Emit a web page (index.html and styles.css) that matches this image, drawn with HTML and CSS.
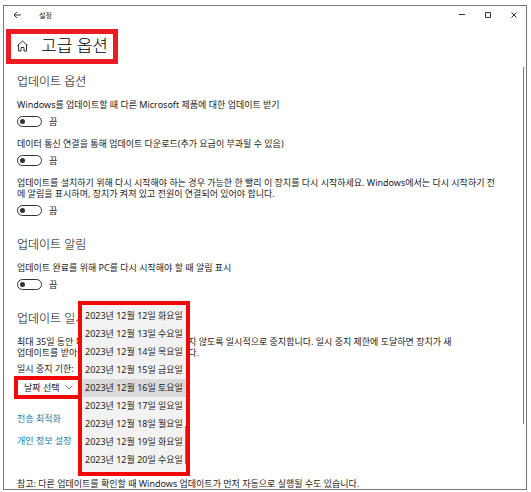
FILE: index.html
```html
<!DOCTYPE html>
<html lang="ko">
<head>
<meta charset="utf-8">
<meta name="viewport" content="width=device-width, initial-scale=1">
<title>설정</title>
<link rel="stylesheet" href="styles.css">
</head>
<body>
<div class="window">
  <header class="titlebar">
    <button class="icon-button" type="button" aria-label="뒤로">
      <svg width="8" height="8" viewBox="0 0 8 8"><path d="M8 4H1M4 1L1 4l3 3"/></svg>
    </button>
    <span class="app-name">설정</span>
    <div class="window-controls">
      <button class="icon-button" type="button" aria-label="최소화">
        <svg width="6" height="6" viewBox="0 0 6 6"><path d="M0 2.500h6"/></svg>
      </button>
      <button class="icon-button" type="button" aria-label="최대화">
        <svg width="6" height="6" viewBox="0 0 6 6"><path d="M.5.5h5v5h-5z"/></svg>
      </button>
      <button class="icon-button" type="button" aria-label="닫기">
        <svg width="6" height="6" viewBox="0 0 6 6"><path d="M.5.5l5 5M5.500.5l-5 5"/></svg>
      </button>
    </div>
  </header>

  <div class="page-title">
    <svg width="11" height="12" viewBox="0 0 11 12" aria-hidden="true"><path d="M.5 5.500L5.500 1l5 4.500M1.500 5v6h2.500V7.500h3V11h2.500V5"/></svg>
    <h1>고급 옵션</h1>
  </div>

  <main class="content">
    <section>
      <h2>업데이트 옵션</h2>
      <div class="setting">
        <label for="other-products">Windows를 업데이트할 때 다른 Microsoft 제품에 대한 업데이트 받기</label>
        <div class="switch-row"><input class="switch" type="checkbox" role="switch" id="other-products"><span>끔</span></div>
      </div>
      <div class="setting">
        <label for="metered">데이터 통신 연결을 통해 업데이트 다운로드(추가 요금이 부과될 수 있음)</label>
        <div class="switch-row"><input class="switch" type="checkbox" role="switch" id="metered"><span>끔</span></div>
      </div>
      <div class="setting">
        <label for="restart">업데이트를 설치하기 위해 다시 시작해야 하는 경우 가능한 한 빨리 이 장치를 다시 시작하세요. Windows에서는 다시 시작하기 전<br>에 알림을 표시하며, 장치가 켜져 있고 전원이 연결되어 있어야 합니다.</label>
        <div class="switch-row"><input class="switch" type="checkbox" role="switch" id="restart"><span>끔</span></div>
      </div>
    </section>

    <section>
      <h2>업데이트 알림</h2>
      <div class="setting">
        <label for="notify">업데이트 완료를 위해 PC를 다시 시작해야 할 때 알림 표시</label>
        <div class="switch-row"><input class="switch" type="checkbox" role="switch" id="notify"><span>끔</span></div>
      </div>
    </section>

    <section>
      <h2>업데이트 일시 중지</h2>
      <p>최대 35일 동안 디바이스에 업데이트가 설치되지 않도록 일시적으로 중지합니다. 일시 중지 제한에 도달하면 장치가 새<br>업데이트를 받아야 다시 일시 중지할 수 있습니다.</p>
      <label class="pause-label" for="pause">일시 중지 기한:</label>
      <div class="picker">
        <select id="pause"><option>날짜 선택</option></select>
        <svg class="chevron" width="8" height="5" viewBox="0 0 8 5" aria-hidden="true"><path d="M.5.5L4 4 7.500.5"/></svg>
        <ul class="date-list" role="listbox" aria-label="일시 중지 기한">
          <li role="option">2023년 12월 12일 화요일</li>
          <li role="option">2023년 12월 13일 수요일</li>
          <li role="option">2023년 12월 14일 목요일</li>
          <li role="option">2023년 12월 15일 금요일</li>
          <li role="option" aria-selected="true">2023년 12월 16일 토요일</li>
          <li role="option">2023년 12월 17일 일요일</li>
          <li role="option">2023년 12월 18일 월요일</li>
          <li role="option">2023년 12월 19일 화요일</li>
          <li role="option">2023년 12월 20일 수요일</li>
        </ul>
      </div>
    </section>

    <nav class="links">
      <a href="#delivery">전송 최적화</a>
      <a href="#privacy">개인 정보 설정</a>
    </nav>
    <p class="note">참고: 다른 업데이트를 확인할 때 Windows 업데이트가 먼저 자동으로 실행될 수도 있습니다.</p>
  </main>
  <div class="scrollbar"></div>
</div>
</body>
</html>
```

FILE: styles.css
```css
* { box-sizing: border-box; }

body {
  margin: 5px 4px 2px 3px;
  background: #fff;
  color: #222;
  font: 9px/11px "Noto Sans", "Noto Sans CJK KR", sans-serif;
}

h1, h2, p, ul { margin: 0; padding: 0; }
h1, h2 { color: #000; font-weight: 300; }
h1 { font-size: 17px; line-height: 24px; }
h2 { margin-bottom: 9px; font-size: 12px; line-height: 16px; }
svg { display: block; fill: none; stroke: #333; }

.window {
  position: relative;
  border: 1px solid #777;
}

.titlebar {
  display: flex;
  align-items: center;
  height: 18px;
  padding: 0 9px;
}
.icon-button {
  padding: 0;
  border: 0;
  background: none;
}
.app-name { margin-left: 18px; font-size: 7px; }
.window-controls {
  display: flex;
  gap: 20px;
  margin-left: auto;
}

.page-title {
  display: flex;
  align-items: center;
  gap: 13px;
  width: fit-content;
  height: 35px;
  margin: 5px 0 10px 2px;
  padding: 0 5px 2px 6px;
  border: 5px solid #ed1c24;
}

.content { padding: 0 13px; }
section { margin-bottom: 21px; }
label { display: block; }
.setting + .setting { margin-top: 11px; }

.switch-row {
  display: flex;
  align-items: center;
  gap: 7px;
  margin-top: 6px;
}
.switch {
  appearance: none;
  display: flex;
  align-items: center;
  width: 25px;
  height: 11px;
  margin: 0;
  padding-left: 2px;
  border: 1px solid #333;
  border-radius: 6px;
}
.switch::before {
  content: "";
  width: 5px;
  height: 5px;
  border-radius: 50%;
  background: #333;
}
.switch:checked { justify-content: flex-end; padding: 0 2px 0 0; }

.pause-label { margin: 5px 0 2px; }
.picker {
  position: relative;
  display: flex;
  align-items: center;
  width: 68px;
  height: 23px;
  margin-left: -3px;
  border: 4px solid #f00808;
}
.picker select {
  appearance: none;
  width: 100%;
  padding: 0 0 0 6px;
  border: 0;
  background: #fff;
  color: inherit;
  font: inherit;
}
.chevron {
  position: absolute;
  right: 5px;
  stroke: #777;
}

.date-list {
  position: absolute;
  top: -79px;
  left: 60px;
  padding: 2px 0 3px;
  border: 4px solid #f00808;
  background: #f2f2f2;
  list-style: none;
  white-space: nowrap;
}
.date-list::after {
  content: "";
  position: absolute;
  right: 0;
  bottom: 8px;
  width: 1px;
  height: 38px;
  background: #777;
}
.date-list li { padding: 0 3px; line-height: 18px; }
.date-list [aria-selected="true"] { background: #dadada; }

.links {
  display: flex;
  flex-direction: column;
  align-items: flex-start;
  gap: 11px;
  margin-top: -7px;
}
.links a { color: #1581ad; text-decoration: none; }
.note { margin-top: 32px; }

.scrollbar {
  position: absolute;
  top: 61px;
  right: 2px;
  width: 1px;
  height: 74%;
  background: #777;
}
```
